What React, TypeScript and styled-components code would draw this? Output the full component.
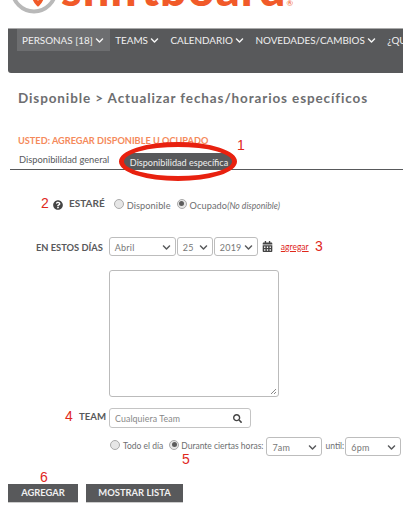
import React from "react";
import styled, { createGlobalStyle } from "styled-components";
import { FaChevronDown, FaSearch, FaCalendarAlt, FaQuestionCircle } from "react-icons/fa";

const Global = createGlobalStyle`
  html, body { margin: 0; padding: 0; background: #fff; overflow: hidden; }
  body { width: 403px; height: 509px; font-family: Lato, "Liberation Sans", sans-serif; color: #58595b; }
`;
const Page = styled.div`width:403px;height:509px;overflow:hidden;position:relative;`;
const Brand = styled.div`height:28px;position:relative;overflow:hidden;`;
const LogoMark = styled.svg`position:absolute;left:10px;top:-34px;width:48px;height:48px;`;
const LogoText = styled.div`position:absolute;left:61px;bottom:16px;font:900 47px/47px Lato,sans-serif;color:#f15a29;letter-spacing:.9px;white-space:nowrap;
  sup{font-size:8px;font-weight:400;line-height:8px;vertical-align:0;letter-spacing:0;}`;
const Nav = styled.nav`margin-left:8px;height:45px;background:#58595b;border-top:1px solid #aaa;border-radius:0 0 0 3px;box-sizing:border-box;padding-left:9px;display:flex;align-items:flex-start;overflow:hidden;white-space:nowrap;`;
const NavItem = styled.div<{ $active?: boolean }>`height:22px;display:flex;align-items:center;gap:2px;padding:0 6.5px 0 5px;background:${p=>p.$active?"#6d6e70":"transparent"};color:#f0f0f0;font-size:9.9px;
  svg{flex:none;}`;
const Title = styled.h1`margin:17px 0 0 18px;font:700 13.5px/16px Lato,sans-serif;letter-spacing:.88px;color:#6d6e70;white-space:nowrap;`;
const Usted = styled.div`margin:28px 0 0 18px;font:700 9.2px/14px Lato,sans-serif;color:#f58a5b;white-space:nowrap;`;
const Tabs = styled.div`margin-left:10px;height:21px;border-bottom:1px solid #58595b;display:flex;align-items:flex-start;`;
const Tab = styled.div`margin:5px 0 0 9px;font-size:9.3px;line-height:14px;color:#58595b;width:90px;white-space:nowrap;`;
const TabActive = styled.div`margin:5px 0 0 13px;width:114px;height:17px;line-height:19px;text-align:center;background:#58595b;color:#eee;font-size:9.1px;border-radius:8.5px;white-space:nowrap;`;
const Row = styled.div<{ $top: number; $left: number }>`display:flex;align-items:center;margin-top:${p=>p.$top}px;margin-left:${p=>p.$left}px;white-space:nowrap;`;
const Label = styled.span<{ $r: number; $size?: number; $l?: number; $dy?: number }>`font:700 ${p=>p.$size ?? 10}px/14px Lato,sans-serif;color:#58595b;margin:${p=>p.$dy ?? -3}px ${p=>p.$r}px 0 ${p=>p.$l ?? 0}px;`;
const Radio = styled.span<{ $on?: boolean; $dy: number }>`width:10px;height:10px;margin-top:${p=>p.$dy}px;border-radius:50%;border:1px solid #aaa;box-sizing:border-box;background:#e6e6e6;display:inline-flex;align-items:center;justify-content:center;flex:none;
  &::after{content:"";width:5px;height:5px;border-radius:50%;background:${p=>p.$on?"#5c5c5c":"transparent"};}`;
const Opt = styled.span<{ $l: number; $r: number; $wide?: boolean; $dy?: number }>`font-size:${p=>p.$wide?"9.2px":"8.5px"};letter-spacing:${p=>p.$wide?".1px":"0"};color:#6d6e70;line-height:14px;margin:${p=>p.$dy ?? 0}px ${p=>p.$r}px 0 ${p=>p.$l}px;em{font-size:8.6px;letter-spacing:0;}`;
const Select = styled.div<{ $w: number; $l?: number }>`width:${p=>p.$w}px;height:19px;box-sizing:border-box;border:1px solid #bdbdbd;border-radius:3px;background:#fff;display:flex;align-items:center;justify-content:space-between;padding:1px 4px 0 5px;margin-left:${p=>p.$l ?? 0}px;font-size:9px;letter-spacing:.2px;color:#777;flex:none;`;
const Area = styled.div`width:170px;height:127px;box-sizing:border-box;border:1px solid #bbb;border-radius:3px;margin:14px 0 0 109px;position:relative;`;
const Grip = styled.svg`position:absolute;right:1px;bottom:1px;width:7px;height:7px;`;
const TeamInput = styled.div`width:142px;height:20px;box-sizing:border-box;border:1px solid #c4c4c4;border-radius:3px;display:flex;align-items:center;justify-content:space-between;padding:0 8px 0 5px;font-size:8.8px;letter-spacing:.1px;color:#888;`;
const Buttons = styled.div`display:flex;gap:8px;margin:28px 0 0 8px;`;
const Btn = styled.div<{ $w: number }>`width:${p=>p.$w}px;height:18px;background:#58595b;color:#f0f0f0;font:700 9.4px/18px Lato,sans-serif;text-align:center;border-bottom:1px solid #ccc;`;
const Mark = styled.span<{ $x: number; $y: number }>`position:absolute;left:${p=>p.$x}px;top:${p=>p.$y}px;color:#e0281c;font:300 14px/16px "Liberation Sans",sans-serif;`;
const Ring = styled.div`position:absolute;left:119px;top:142px;width:118px;height:39px;box-sizing:border-box;border:5px solid #e8210f;border-radius:50%;`;
const Agregar = styled.span`font-size:8.5px;color:#e0281c;text-decoration:underline;margin-left:8px;`;
const CalIcon = styled(FaCalendarAlt)`margin-left:4px;flex:none;`;

export default function App() {
  const d = <FaChevronDown size={9} color="#f4f4f4" />;
  const sd = <FaChevronDown size={9} color="#58595b" />;
  return (
    <Page>
      <Global />
      <Brand>
        <LogoMark viewBox="0 0 48 48">
          <circle cx="24" cy="24" r="21.5" fill="none" stroke="#b9b9b9" strokeWidth="4" />
          <path d="M32 30c0 3-2 6-4 8-2-2-4-5-4-8" fill="none" stroke="#f15a29" strokeWidth="4" strokeLinecap="round" />
        </LogoMark>
        <LogoText>shiftboard<sup>®</sup></LogoText>
      </Brand>
      <Nav>
        <NavItem $active>PERSONAS [18]{d}</NavItem>
        <NavItem>TEAMS{d}</NavItem>
        <NavItem>CALENDARIO{d}</NavItem>
        <NavItem>NOVEDADES/CAMBIOS{d}</NavItem>
        <NavItem>¿QUIÉN</NavItem>
      </Nav>
      <Title>Disponible &gt; Actualizar fechas/horarios específicos</Title>
      <Usted>USTED: AGREGAR DISPONIBLE U OCUPADO</Usted>
      <Tabs>
        <Tab>Disponibilidad general</Tab>
        <TabActive>Disponibilidad específica</TabActive>
      </Tabs>
      <Row $top={26} $left={53}>
        <FaQuestionCircle size={10} color="#444" />
        <Label $l={6} $r={9}>ESTARÉ</Label>
        <Radio $dy={-2} />
        <Opt $wide $l={3} $r={6} $dy={3}>Disponible</Opt>
        <Radio $on $dy={-2} />
        <Opt $wide $l={3} $r={0} $dy={3}>Ocupado<em>(No disponible)</em></Opt>
      </Row>
      <Row $top={24} $left={36}>
        <Label $size={9.3} $r={6} $dy={3}>EN ESTOS DÍAS</Label>
        <Select $w={67}>Abril{sd}</Select>
        <Select $w={36} $l={1}>25{sd}</Select>
        <Select $w={44} $l={1}>2019{sd}</Select>
        <CalIcon size={11} color="#444" />
        <Agregar>agregar</Agregar>
      </Row>
      <Area>
        <Grip viewBox="0 0 7 7"><path d="M1 6 6 1M4 6 6 4" stroke="#888" strokeWidth="1" /></Grip>
      </Area>
      <Row $top={11} $left={79}>
        <Label $size={9.6} $r={3}>TEAM</Label>
        <TeamInput>Cualquiera Team<FaSearch size={9} color="#444" /></TeamInput>
      </Row>
      <Row $top={9} $left={110}>
        <Radio $dy={-4} />
        <Opt $l={3} $r={6} $dy={-1}>Todo el día</Opt>
        <Radio $on $dy={-4} />
        <Opt $l={2} $r={3} $dy={-1}>Durante ciertas horas:</Opt>
        <Select $w={56}>7am{sd}</Select>
        <Opt $l={3} $r={1} $dy={-1}>until:</Opt>
        <Select $w={56}>6pm{sd}</Select>
      </Row>
      <Buttons>
        <Btn $w={70}>AGREGAR</Btn>
        <Btn $w={97}>MOSTRAR LISTA</Btn>
      </Buttons>
      <Ring />
      <Mark $x={237} $y={137}>1</Mark>
      <Mark $x={41} $y={195}>2</Mark>
      <Mark $x={315} $y={238}>3</Mark>
      <Mark $x={65} $y={408}>4</Mark>
      <Mark $x={182} $y={451}>5</Mark>
      <Mark $x={40} $y={469}>6</Mark>
    </Page>
  );
}
